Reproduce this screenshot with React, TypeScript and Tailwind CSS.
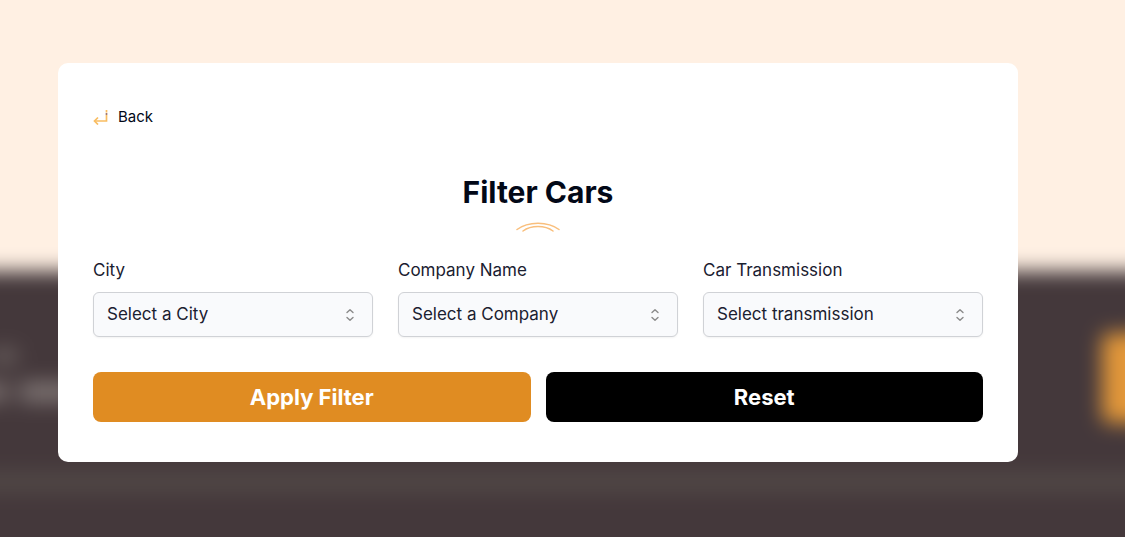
import React, { useId, useState } from "react";

type Field = { label: string; placeholder: string; options: string[] };

const fields: Field[] = [
  { label: "City", placeholder: "Select a City", options: [] },
  { label: "Company Name", placeholder: "Select a Company", options: [] },
  { label: "Car Transmission", placeholder: "Select transmission", options: ["Automatic", "Manual"] },
];

function Backdrop() {
  return (
    <div aria-hidden="true" className="absolute inset-0 overflow-hidden">
      <div className="absolute -inset-10 bg-[#fff0e3] blur-[10px]">
        <div className="absolute inset-x-0 top-[311px] bottom-0 bg-[#44383b]" />
        <div className="absolute inset-x-0 top-[512px] h-[20px] bg-[#514846]" />
        <div className="absolute left-[30px] top-[388px] h-4 w-7 rounded bg-[#655b5a]" />
        <div className="absolute left-0 top-[422px] h-[20px] w-12 bg-[#766c6b]" />
        <div className="absolute left-[60px] top-[422px] h-[20px] w-14 bg-[#7d7372]" />
        <div className="absolute right-0 top-[373px] h-[90px] w-[63px] rounded-lg bg-[#e2973a]" />
      </div>
    </div>
  );
}

function BackIcon() {
  return (
    <svg aria-hidden="true" width="16" height="16" viewBox="0 0 16 16" fill="none" stroke="#f9bd61" strokeWidth="1.7">
      <path d="M13.5 6v6H2" />
      <path d="M5 8.5 1.5 12 5 15.5" />
      <path d="M13.5 1v2.5" />
      <path d="M13.5 4v2" stroke="#a1786f" />
    </svg>
  );
}

function Arcs() {
  return (
    <svg aria-hidden="true" width="44" height="10" viewBox="0 0 44 10" fill="none" stroke="#f9bf7d" strokeWidth="1.5" strokeLinecap="round">
      <path d="M1 7.5C12-1 32-1 43 7.5" />
      <path d="M7 9C15 3 29 3 37 9" />
    </svg>
  );
}

function SelectField({ label, placeholder, options }: Field) {
  const id = useId();
  return (
    <div className="flex min-w-0 flex-col gap-2">
      <label htmlFor={id} className="text-[17px] leading-7 text-[#1a2030]">{label}</label>
      <div className="grid items-center">
        <select
          id={id}
          defaultValue=""
          className="col-start-1 row-start-1 h-[45px] w-full appearance-none rounded-md border border-[#d0d2d6] bg-[#f9fafc] pl-[13px] pr-10 text-[17px] text-[#1a2030] shadow-xs"
        >
          <option value="">{placeholder}</option>
          {options.map((option) => (
            <option key={option}>{option}</option>
          ))}
        </select>
        <svg aria-hidden="true" width="18" height="18" viewBox="0 0 18 18" fill="none" stroke="#8b8b8b" strokeWidth="1.4" strokeLinecap="round" strokeLinejoin="round" className="pointer-events-none col-start-1 row-start-1 mr-[14px] justify-self-end">
          <path d="M6 6.5 9 3.7l3 2.8M6 11.5l3 2.8 3-2.8" />
        </svg>
      </div>
    </div>
  );
}

export default function App() {
  const [formKey, setFormKey] = useState(0);
  return (
    <div className="relative min-h-screen font-['Inter',sans-serif] text-[#020817]">
      <Backdrop />
      <main className="relative pt-[63px] pr-[107px] pb-10 pl-[58px]">
        <section className="rounded-[10px] bg-white px-[35px] pt-10 pb-10">
          <a href="#" className="inline-flex h-7 items-center gap-[9px] text-[15px]">
            <BackIcon />
            Back
          </a>
          <div className="mt-[43px] flex flex-col items-center gap-3">
            <h1 className="text-3xl font-bold">Filter Cars</h1>
            <Arcs />
          </div>
          <form key={formKey} onSubmit={(e: React.FormEvent) => e.preventDefault()} className="mt-6">
            <div className="grid grid-cols-3 gap-[25px]">
              {fields.map((field) => (
                <SelectField key={field.label} {...field} />
              ))}
            </div>
            <div className="mt-[35px] grid grid-cols-2 gap-[15px] text-[22px] font-bold text-white">
              <button type="submit" className="h-[50px] rounded-lg bg-[#e08c22]">Apply Filter</button>
              <button type="button" onClick={() => setFormKey((k) => k + 1)} className="h-[50px] rounded-lg bg-black">Reset</button>
            </div>
          </form>
        </section>
      </main>
    </div>
  );
}
